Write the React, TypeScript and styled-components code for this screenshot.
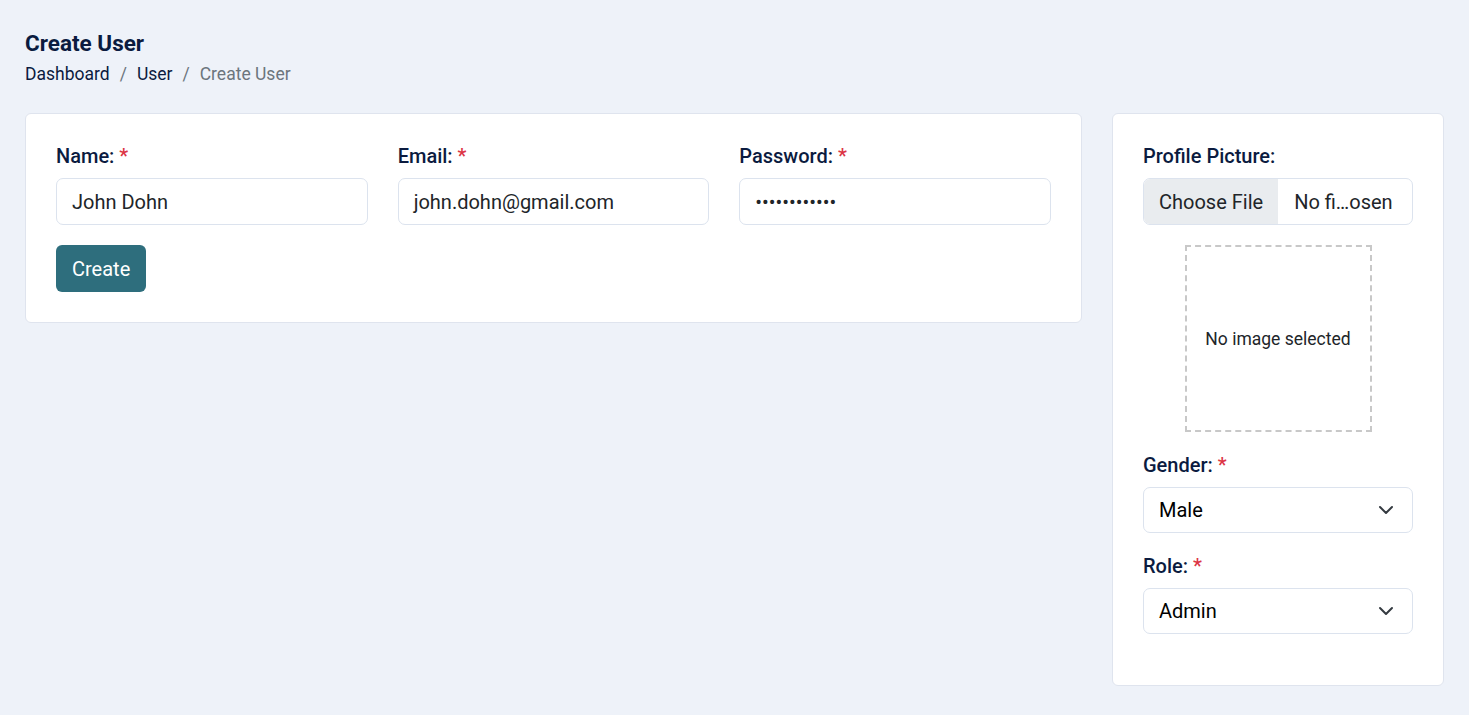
import React from 'react'
import styled, { createGlobalStyle } from 'styled-components'

const GlobalStyle = createGlobalStyle`
  html, body {
    margin: 0;
    padding: 0;
    background-color: #eef2f9;
    font-family: Roboto, 'Liberation Sans', sans-serif;
    color: #0b1b3f;
  }

  * {
    box-sizing: border-box;
  }
`

function Chevron() {
  return (
    <svg width="16" height="16" viewBox="0 0 16 16" fill="none">
      <path d="M2 5l6 6 6-6" stroke="#343a40" strokeWidth="2" strokeLinecap="round" strokeLinejoin="round" />
    </svg>
  )
}

function App() {
  return (
    <SPage>
      <GlobalStyle />
      <SHeader>
        <STitle>Create User</STitle>
        <SBreadcrumb>
          <SCrumb>Dashboard</SCrumb>
          <SDivider>/</SDivider>
          <SCrumb>User</SCrumb>
          <SDivider>/</SDivider>
          <SCrumb current>Create User</SCrumb>
        </SBreadcrumb>
      </SHeader>

      <SLayout>
        <SCard bottom={30}>
          <SFieldRow>
            <SField>
              <SLabel>
                Name: <SRequired>*</SRequired>
              </SLabel>
              <SInput>John Dohn</SInput>
            </SField>
            <SField>
              <SLabel>
                Email: <SRequired>*</SRequired>
              </SLabel>
              <SInput>john.dohn@gmail.com</SInput>
            </SField>
            <SField>
              <SLabel>
                Password: <SRequired>*</SRequired>
              </SLabel>
              <SInput>••••••••••••</SInput>
            </SField>
          </SFieldRow>
          <SButton>Create</SButton>
        </SCard>

        <SCard bottom={31}>
          <SField>
            <SLabel>Profile Picture:</SLabel>
            <SFileInput>
              <SFileButton>Choose File</SFileButton>
              <SFileName>No fi…osen</SFileName>
            </SFileInput>
          </SField>
          <SPreview>No image selected</SPreview>
          <SField>
            <SLabel>
              Gender: <SRequired>*</SRequired>
            </SLabel>
            <SSelect>
              <span>Male</span>
              <Chevron />
            </SSelect>
          </SField>
          <SField>
            <SLabel>
              Role: <SRequired>*</SRequired>
            </SLabel>
            <SSelect>
              <span>Admin</span>
              <Chevron />
            </SSelect>
          </SField>
        </SCard>
      </SLayout>
    </SPage>
  )
}

export default App

const SPage = styled.div`
  padding: 30px 25px 29px;
`

const SHeader = styled.div`
  margin-bottom: 25px;
`

const STitle = styled.h1`
  font-size: 22.5px;
  font-weight: 700;
  line-height: 26px;
  margin: 0 0 5px;
  color: #0b1b3f;
`

const SBreadcrumb = styled.div`
  display: flex;
  align-items: center;
  font-size: 17.5px;
  line-height: 27px;
`

const SCrumb = styled.span<{ current?: boolean }>`
  color: ${({ current }) => (current ? '#6c757d' : '#0b1b3f')};
`

const SDivider = styled.span`
  color: #6c757d;
  padding: 0 10px;
`

const SLayout = styled.div`
  display: grid;
  grid-template-columns: 1fr 332px;
  gap: 30px;
  align-items: start;
`

const SCard = styled.div<{ bottom: number }>`
  background-color: #ffffff;
  border: 1px solid #dfe4ee;
  border-radius: 6px;
  padding: 29px 30px ${({ bottom }) => bottom}px;
`

const SFieldRow = styled.div`
  display: grid;
  grid-template-columns: repeat(3, 1fr);
  gap: 30px;
`

const SField = styled.div`
  display: flex;
  flex-direction: column;
  margin-bottom: 20px;
`

const SLabel = styled.label`
  font-size: 20px;
  font-weight: 500;
  line-height: 26px;
  margin-bottom: 9px;
  color: #0b1b3f;
`

const SRequired = styled.span`
  color: #dc3545;
`

const SInput = styled.div`
  height: 47px;
  border: 1px solid #dce3ee;
  border-radius: 7px;
  padding: 0 15px;
  display: flex;
  align-items: center;
  font-size: 20px;
  color: #212529;
`

const SButton = styled.button`
  align-self: flex-start;
  height: 47px;
  padding: 0 16px;
  border: none;
  border-radius: 6px;
  background-color: #2e6e7d;
  color: #ffffff;
  font-family: Roboto, 'Liberation Sans', sans-serif;
  font-size: 20px;
  cursor: pointer;
`

const SFileInput = styled.div`
  display: flex;
  height: 47px;
  border: 1px solid #dce3ee;
  border-radius: 7px;
  overflow: hidden;
  font-size: 20px;
  color: #212529;
`

const SFileButton = styled.span`
  display: flex;
  align-items: center;
  padding: 0 15px;
  background-color: #e9ecef;
`

const SFileName = styled.span`
  display: flex;
  align-items: center;
  padding: 0 16px;
`

const SPreview = styled.div`
  width: 187px;
  height: 187px;
  margin: 0 auto 20px;
  border: 2px dashed #c8c8c8;
  display: flex;
  align-items: center;
  justify-content: center;
  font-size: 17.5px;
  color: #212529;
`

const SSelect = styled.div`
  height: 46px;
  border: 1px solid #dce3ee;
  border-radius: 7px;
  padding: 0 18px 0 15px;
  display: flex;
  align-items: center;
  justify-content: space-between;
  font-size: 20px;
  color: #000000;
`
